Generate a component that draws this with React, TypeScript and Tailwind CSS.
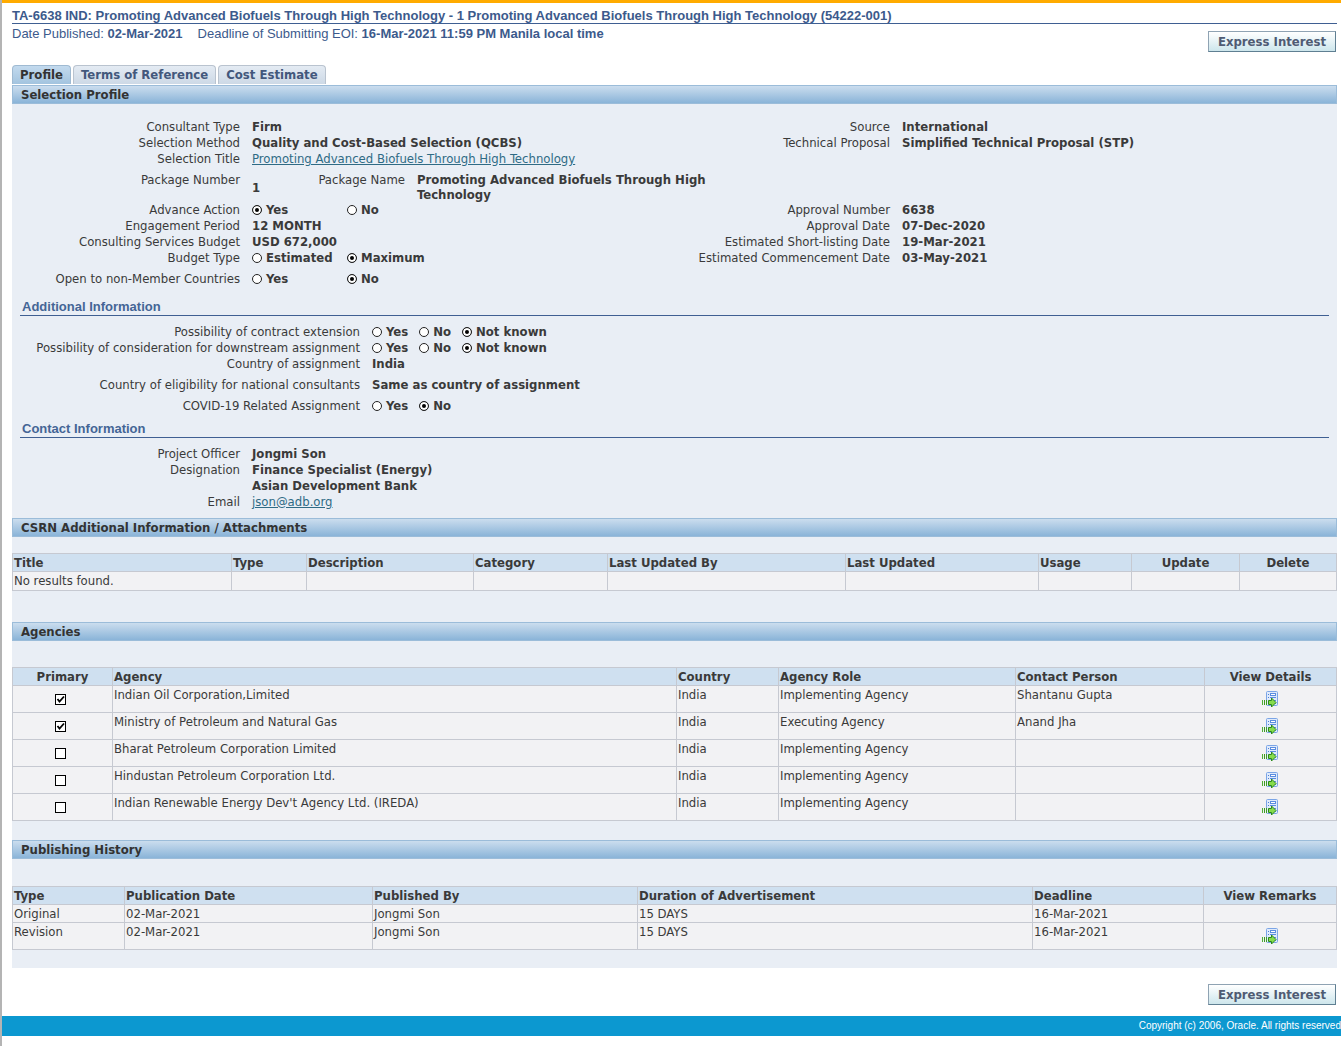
import type { ReactNode } from 'react'

const sans = "font-['DejaVu_Sans_Condensed','DejaVu_Sans',sans-serif]"
const arial = "font-['Liberation_Sans',sans-serif]"

const agencies = [
  { name: 'Indian Oil Corporation,Limited', role: 'Implementing Agency', contact: 'Shantanu Gupta', primary: true },
  { name: 'Ministry of Petroleum and Natural Gas', role: 'Executing Agency', contact: 'Anand Jha', primary: true },
  { name: 'Bharat Petroleum Corporation Limited', role: 'Implementing Agency', contact: '', primary: false },
  { name: 'Hindustan Petroleum Corporation Ltd.', role: 'Implementing Agency', contact: '', primary: false },
  { name: "Indian Renewable Energy Dev't Agency Ltd. (IREDA)", role: 'Implementing Agency', contact: '', primary: false },
]

const cell = 'border border-[#c6c9d1] px-px pt-px leading-4 align-top'

function DetailsIcon() {
  return (
    <svg width="16" height="16" viewBox="0 0 16 16" aria-hidden="true">
      <rect x="4.5" y="0.5" width="11" height="14" rx="1" fill="#dfeafb" stroke="#7ba5e6" />
      <path d="M6 3.5h1M6 6.5h1" stroke="#4a7fd6" />
      <rect x="8.5" y="2.5" width="5" height="2" fill="#fff" stroke="#5b8de0" />
      <path d="M8 6.5h6M12 9.5h2M13 12.5h1" stroke="#5b8de0" />
      <path d="M0.5 9v5" stroke="#4fae33" />
      <path d="M2.5 9v5M4.5 9v5" stroke="#3d9b22" />
      <path d="M6.5 9.5h3v-2.5l4.5 4.5-4.5 4.5v-2.5h-3z" fill="#86dc4c" stroke="#2b8a1a" />
    </svg>
  )
}

function SectionBar({ children }: { children: ReactNode }) {
  return (
    <h2 className="h-[19px] pl-2 border border-[#9bbcd9] bg-linear-to-b from-[#cbddee] to-[#8ab4d8] font-bold leading-[18px] text-[#333]">
      {children}
    </h2>
  )
}

function SubHeading({ children }: { children: ReactNode }) {
  return (
    <h3 className={`${arial} mx-2 pl-0.5 border-b border-[#3f5f92] font-bold leading-4 text-[#446595]`}>{children}</h3>
  )
}

function Radio({ name, label, checked = false }: { name: string; label: string; checked?: boolean }) {
  return (
    <label className="flex items-center gap-1 font-bold">
      <input type="radio" name={name} defaultChecked={checked}
        className="appearance-none size-[10px] rounded-full border border-[#222] bg-white checked:bg-black checked:shadow-[inset_0_0_0_2px_#fff]" />
      {label}
    </label>
  )
}

function RadioPair({ name, labels, selected }: { name: string; labels: string[]; selected: number }) {
  return (
    <div className="grid grid-cols-[95px_auto] justify-start">
      {labels.map((l, i) => <Radio key={l} name={name} label={l} checked={i === selected} />)}
    </div>
  )
}

function RadioRow({ name, labels, selected }: { name: string; labels: string[]; selected: number }) {
  return (
    <div className="flex gap-[11px]">
      {labels.map((l, i) => <Radio key={l} name={name} label={l} checked={i === selected} />)}
    </div>
  )
}

function ProfileRow({ label, value, rightLabel, rightValue }: { label: string; value: ReactNode; rightLabel?: string; rightValue?: string }) {
  return (
    <div className="grid grid-cols-[228px_1fr_200px_435px] gap-x-3 leading-4">
      <div className="text-right">{label}</div>
      <div className="font-bold whitespace-nowrap">{value}</div>
      <div className="text-right whitespace-nowrap">{rightLabel}</div>
      <div className="font-bold">{rightValue}</div>
    </div>
  )
}

function InfoRow({ label, children, wide = false }: { label: string; children: ReactNode; wide?: boolean }) {
  return (
    <div className={`grid gap-x-3 leading-4 ${wide ? 'grid-cols-[348px_1fr]' : 'grid-cols-[228px_1fr]'}`}>
      <div className="text-right">{label}</div>
      <div className="font-bold">{children}</div>
    </div>
  )
}

function Table({ head, widths, centered, children }: { head: string[]; widths: string[]; centered: number[]; children: ReactNode }) {
  return (
    <table className="w-full table-fixed border-collapse bg-[#f2f2f4]">
      <colgroup>
        {widths.map((w, i) => <col key={i} className={w} />)}
      </colgroup>
      <thead>
        <tr className="h-[18px] bg-[#cfe0f0]">
          {head.map((h, i) => (
            <th key={h} className={`${cell} ${centered.includes(i) ? 'text-center' : 'text-left'}`}>{h}</th>
          ))}
        </tr>
      </thead>
      <tbody>{children}</tbody>
    </table>
  )
}

function ExpressButton() {
  return (
    <button className="h-[21px] px-[9px] border border-[#8fa3b3] border-r-[#5f7f92] border-b-[#5f7f92] bg-linear-to-b from-white to-[#cde6ec] font-bold leading-[19px] text-[#4f5b73]">
      Express Interest
    </button>
  )
}

export default function App() {
  return (
    <div className={`${sans} min-h-screen border-l-2 border-[#b4b4b4] bg-white text-[13px] text-[#3a3a3a]`}>
      <div className="h-[3px] bg-[#ffab00]" />
      <header className="pl-[10px] pr-1">
        <h1 className={`${arial} h-[21px] pt-[5px] border-b border-[#3f5f92] text-[13px] font-bold leading-4 text-[#3c5a8c]`}>
          TA-6638 IND: Promoting Advanced Biofuels Through High Technology - 1 Promoting Advanced Biofuels Through High Technology (54222-001)
        </h1>
        <div className="flex justify-between">
          <p className={`${arial} flex gap-[15px] pt-0.5 text-[13px] leading-4 text-[#3c5a8c]`}>
            <span>Date Published: <b>02-Mar-2021</b></span>
            <span>Deadline of Submitting EOI: <b>16-Mar-2021 11:59 PM Manila local time</b></span>
          </p>
          <div className="pt-[7px] pr-px"><ExpressButton /></div>
        </div>
      </header>

      <main className="pl-[10px] pr-1">
        <nav className="flex gap-0.5 pt-[13px] pb-px font-bold leading-[17px]">
          <a href="#profile" className="h-[19px] px-[7px] rounded-t-[4px] border border-b-0 border-[#9fbad2] bg-linear-to-b from-[#c3daee] to-[#a3c4df] text-[#333]">Profile</a>
          <a href="#terms" className="h-[19px] px-[7px] rounded-t-[4px] border border-b-0 border-[#b9c3cf] bg-linear-to-b from-[#e4ebf3] to-[#cdd9e6] text-[#43587c]">Terms of Reference</a>
          <a href="#cost" className="h-[19px] px-[7px] rounded-t-[4px] border border-b-0 border-[#b9c3cf] bg-linear-to-b from-[#e4ebf3] to-[#cdd9e6] text-[#43587c]">Cost Estimate</a>
        </nav>

        <div className="bg-[#e9eef5] pb-[18px]">
          <SectionBar>Selection Profile</SectionBar>
          <div className="pt-[15px] pb-3">
            <ProfileRow label="Consultant Type" value="Firm" rightLabel="Source" rightValue="International" />
            <ProfileRow label="Selection Method" value="Quality and Cost-Based Selection (QCBS)" rightLabel="Technical Proposal" rightValue="Simplified Technical Proposal (STP)" />
            <ProfileRow label="Selection Title"
              value={<a href="#title" className="font-normal text-[#2f6b85] underline">Promoting Advanced Biofuels Through High Technology</a>} />
            <div className="grid grid-cols-[228px_1fr] gap-x-3 pt-[5px] leading-[15px]">
              <div className="text-right">Package Number</div>
              <div className="flex gap-3">
                <b className="w-[20px] self-center">1</b>
                <span className="w-[121px] text-right">Package Name</span>
                <b className="w-[300px]">Promoting Advanced Biofuels Through High Technology</b>
              </div>
            </div>
            <ProfileRow label="Advance Action" value={<RadioPair name="advance" labels={['Yes', 'No']} selected={0} />} rightLabel="Approval Number" rightValue="6638" />
            <ProfileRow label="Engagement Period" value="12 MONTH" rightLabel="Approval Date" rightValue="07-Dec-2020" />
            <ProfileRow label="Consulting Services Budget" value="USD 672,000" rightLabel="Estimated Short-listing Date" rightValue="19-Mar-2021" />
            <ProfileRow label="Budget Type" value={<RadioPair name="budget" labels={['Estimated', 'Maximum']} selected={1} />} rightLabel="Estimated Commencement Date" rightValue="03-May-2021" />
            <div className="pt-[5px]">
              <ProfileRow label="Open to non-Member Countries" value={<RadioPair name="open" labels={['Yes', 'No']} selected={1} />} />
            </div>
          </div>

          <SubHeading>Additional Information</SubHeading>
          <div className="pt-2 pb-[7px]">
            <InfoRow wide label="Possibility of contract extension"><RadioRow name="ext" labels={['Yes', 'No', 'Not known']} selected={2} /></InfoRow>
            <InfoRow wide label="Possibility of consideration for downstream assignment"><RadioRow name="down" labels={['Yes', 'No', 'Not known']} selected={2} /></InfoRow>
            <InfoRow wide label="Country of assignment">India</InfoRow>
            <div className="grid gap-[5px] pt-[5px]">
              <InfoRow wide label="Country of eligibility for national consultants">Same as country of assignment</InfoRow>
              <InfoRow wide label="COVID-19 Related Assignment"><RadioRow name="covid" labels={['Yes', 'No']} selected={1} /></InfoRow>
            </div>
          </div>

          <SubHeading>Contact Information</SubHeading>
          <div className="py-2">
            <InfoRow label="Project Officer">Jongmi Son</InfoRow>
            <InfoRow label="Designation">Finance Specialist (Energy)<br />Asian Development Bank</InfoRow>
            <InfoRow label="Email"><a href="mailto:json@adb.org" className="font-normal text-[#2f6b85] underline">json@adb.org</a></InfoRow>
          </div>

          <SectionBar>CSRN Additional Information / Attachments</SectionBar>
          <div className="pt-4 pb-[31px]">
            <Table head={['Title', 'Type', 'Description', 'Category', 'Last Updated By', 'Last Updated', 'Usage', 'Update', 'Delete']}
              widths={['w-[219px]', 'w-[75px]', 'w-[167px]', 'w-[134px]', '', 'w-[193px]', 'w-[93px]', 'w-[108px]', 'w-[97px]']} centered={[7, 8]}>
              <tr className="h-[19px]">
                <td className={cell}>No results found.</td>
                {Array.from({ length: 8 }, (_, i) => <td key={i} className={cell} />)}
              </tr>
            </Table>
          </div>

          <SectionBar>Agencies</SectionBar>
          <div className="pt-[26px] pb-[19px]">
            <Table head={['Primary', 'Agency', 'Country', 'Agency Role', 'Contact Person', 'View Details']}
              widths={['w-[100px]', '', 'w-[102px]', 'w-[237px]', 'w-[189px]', 'w-[132px]']} centered={[0, 5]}>
              {agencies.map(a => (
                <tr key={a.name} className="h-[27px]">
                  <td className={`${cell} pr-[5px]`}>
                    <span className="relative mx-auto mt-[7px] block size-[11px]">
                      <input type="checkbox" aria-label={`${a.name} primary`} defaultChecked={a.primary}
                        className="peer block size-full appearance-none border border-black bg-white" />
                      <svg viewBox="0 0 11 11" className="pointer-events-none absolute inset-0 hidden peer-checked:block" aria-hidden="true">
                        <path d="M2.5 5l2 2.5 4.5-5" fill="none" stroke="#000" strokeWidth="1.8" />
                      </svg>
                    </span>
                  </td>
                  <td className={cell}>{a.name}</td>
                  <td className={cell}>India</td>
                  <td className={cell}>{a.role}</td>
                  <td className={cell}>{a.contact}</td>
                  <td className={`${cell} pr-0.5`}>
                    <button aria-label="View details" className="mx-auto mt-1 block"><DetailsIcon /></button>
                  </td>
                </tr>
              ))}
            </Table>
          </div>

          <SectionBar>Publishing History</SectionBar>
          <div className="pt-[27px]">
            <Table head={['Type', 'Publication Date', 'Published By', 'Duration of Advertisement', 'Deadline', 'View Remarks']}
              widths={['w-[112px]', 'w-[248px]', 'w-[265px]', '', 'w-[171px]', 'w-[133px]']} centered={[5]}>
              {['Original', 'Revision'].map((type, i) => (
                <tr key={type} className={i ? 'h-[27px]' : 'h-[18px]'}>
                  <td className={cell}>{type}</td>
                  <td className={cell}>02-Mar-2021</td>
                  <td className={cell}>Jongmi Son</td>
                  <td className={cell}>15 DAYS</td>
                  <td className={cell}>16-Mar-2021</td>
                  <td className={cell}>
                    {i === 1 && <button aria-label="View remarks" className="mx-auto mt-1 block"><DetailsIcon /></button>}
                  </td>
                </tr>
              ))}
            </Table>
          </div>
        </div>
        <div className="flex justify-end pt-4 pb-[11px] pr-px"><ExpressButton /></div>
      </main>

      <footer className={`${arial} h-5 bg-[#0c98d0] text-right text-[10px] leading-5 text-white`}>
        Copyright (c) 2006, Oracle. All rights reserved
      </footer>
    </div>
  )
}
